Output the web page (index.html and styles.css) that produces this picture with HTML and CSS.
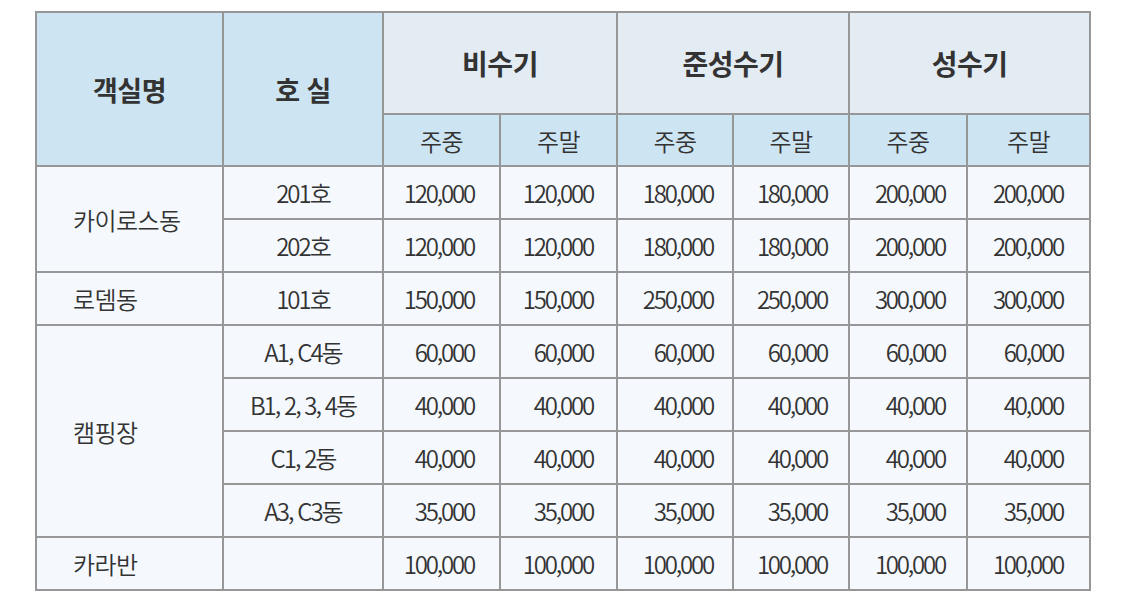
FILE: index.html
```html
<!DOCTYPE html>
<html lang="ko">
<head>
<meta charset="utf-8">
<title>객실 요금표</title>
<link rel="stylesheet" href="styles.css">
</head>
<body>
<table class="rates">
  <colgroup>
    <col class="c-name">
    <col class="c-room">
    <col class="c-a"><col class="c-a">
    <col class="c-b"><col class="c-b">
    <col class="c-c"><col class="c-d">
  </colgroup>
  <thead>
    <tr class="h1">
      <th rowspan="2" class="hb">객실명</th>
      <th rowspan="2" class="hb">호 실</th>
      <th colspan="2" class="hg">비수기</th>
      <th colspan="2" class="hg">준성수기</th>
      <th colspan="2" class="hg">성수기</th>
    </tr>
    <tr class="h2">
      <th class="hs">주중</th><th class="hs">주말</th>
      <th class="hs">주중</th><th class="hs">주말</th>
      <th class="hs">주중</th><th class="hs">주말</th>
    </tr>
  </thead>
  <tbody>
    <tr>
      <td rowspan="2" class="name">카이로스동</td>
      <td class="room">201호</td>
      <td class="num p1">120,000</td><td class="num p2">120,000</td>
      <td class="num p3">180,000</td><td class="num p4">180,000</td>
      <td class="num p5">200,000</td><td class="num p6">200,000</td>
    </tr>
    <tr>
      <td class="room">202호</td>
      <td class="num p1">120,000</td><td class="num p2">120,000</td>
      <td class="num p3">180,000</td><td class="num p4">180,000</td>
      <td class="num p5">200,000</td><td class="num p6">200,000</td>
    </tr>
    <tr>
      <td class="name">로뎀동</td>
      <td class="room">101호</td>
      <td class="num p1">150,000</td><td class="num p2">150,000</td>
      <td class="num p3">250,000</td><td class="num p4">250,000</td>
      <td class="num p5">300,000</td><td class="num p6">300,000</td>
    </tr>
    <tr>
      <td rowspan="4" class="name">캠핑장</td>
      <td class="room">A1, C4동</td>
      <td class="num p1">60,000</td><td class="num p2">60,000</td>
      <td class="num p3">60,000</td><td class="num p4">60,000</td>
      <td class="num p5">60,000</td><td class="num p6">60,000</td>
    </tr>
    <tr>
      <td class="room">B1, 2, 3, 4동</td>
      <td class="num p1">40,000</td><td class="num p2">40,000</td>
      <td class="num p3">40,000</td><td class="num p4">40,000</td>
      <td class="num p5">40,000</td><td class="num p6">40,000</td>
    </tr>
    <tr>
      <td class="room">C1, 2동</td>
      <td class="num p1">40,000</td><td class="num p2">40,000</td>
      <td class="num p3">40,000</td><td class="num p4">40,000</td>
      <td class="num p5">40,000</td><td class="num p6">40,000</td>
    </tr>
    <tr>
      <td class="room">A3, C3동</td>
      <td class="num p1">35,000</td><td class="num p2">35,000</td>
      <td class="num p3">35,000</td><td class="num p4">35,000</td>
      <td class="num p5">35,000</td><td class="num p6">35,000</td>
    </tr>
    <tr>
      <td class="name">카라반</td>
      <td class="room"></td>
      <td class="num p1">100,000</td><td class="num p2">100,000</td>
      <td class="num p3">100,000</td><td class="num p4">100,000</td>
      <td class="num p5">100,000</td><td class="num p6">100,000</td>
    </tr>
  </tbody>
</table>
</body>
</html>
```

FILE: styles.css
```css
html, body {
  margin: 0;
  padding: 0;
  background: #ffffff;
}
body {
  padding: 11px 0 0 35px;
  font-family: "Noto Sans CJK KR", "Noto Sans", sans-serif;
  color: #333333;
}
.rates {
  border-collapse: collapse;
  table-layout: fixed;
  width: 1054px;
}
.c-name { width: 187px; }
.c-room { width: 160px; }
.c-a { width: 117px; }
.c-b { width: 116px; }
.c-c { width: 118px; }
.c-d { width: 123px; }

.rates th, .rates td {
  border: 2px solid #979797;
  padding: 0;
  vertical-align: middle;
}
.h1 { height: 102px; }
.h2 { height: 52px; }
.rates tbody tr { height: 53px; }

.hb {
  background: #cde4f2;
  font-size: 27px;
  font-weight: 700;
  letter-spacing: -0.5px;
}
.hg {
  background: #e3ebf3;
  font-size: 28px;
  font-weight: 700;
  letter-spacing: -0.5px;
  padding-bottom: 4px;
}
.hs {
  background: #cde4f2;
  font-size: 24px;
  font-weight: 350;
  letter-spacing: -0.5px;
}
.rates td {
  background: #f5f9fd;
  font-size: 24px;
  font-weight: 350;
  letter-spacing: -0.6px;
}
.name {
  text-align: left;
  padding-left: 36px !important;
}
.room {
  text-align: center;
  letter-spacing: -2px !important;
}
.num {
  text-align: right;
  letter-spacing: -2.2px !important;
}
.p1 { padding-right: 25px !important; }
.p2 { padding-right: 23px !important; }
.p3 { padding-right: 19px !important; }
.p4 { padding-right: 21px !important; }
.p5 { padding-right: 21px !important; }
.p6 { padding-right: 26px !important; }
```
